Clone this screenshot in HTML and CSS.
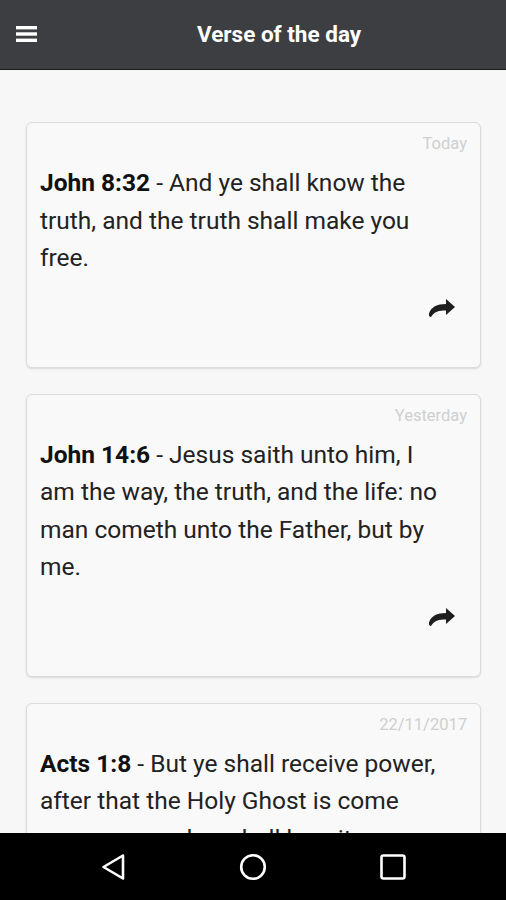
FILE: index.html
```html
<!DOCTYPE html>
<html lang="en">
<head>
    <meta charset="UTF-8">
    <meta name="viewport" content="width=device-width, initial-scale=1.0">
    <title>Verse of the day</title>
    <link rel="stylesheet" href="styles.css">
</head>
<body>
    <header class="app-bar">
        <svg class="menu-icon" width="22" height="18" viewBox="0 0 22 18">
            <rect x="0" y="1" width="21" height="3.4" fill="#fff"/>
            <rect x="0" y="7.3" width="21" height="3.4" fill="#fff"/>
            <rect x="0" y="13.6" width="21" height="3.4" fill="#fff"/>
        </svg>
        <h1 class="app-title">Verse of the day</h1>
    </header>

    <main class="verse-list">
        <div class="card">
            <div class="card-date">Today</div>
            <p class="verse"><b>John 8:32</b> - And ye shall know the truth, and the truth shall make you free.</p>
            <div class="card-actions">
                <svg class="share-icon" width="27" height="18" viewBox="0 0 27 18"><path d="M18 0 L27 8 L18 16 V11.5 C11 11.5 6 12.5 3 18 C1.5 18 0.5 16.5 1 14.5 C3 8 9 5 18 5 Z" fill="#1e1e1e"/></svg>
            </div>
        </div>

        <div class="card">
            <div class="card-date">Yesterday</div>
            <p class="verse"><b>John 14:6</b> - Jesus saith unto him, I am the way, the truth, and the life: no man cometh unto the Father, but by me.</p>
            <div class="card-actions">
                <svg class="share-icon" width="27" height="18" viewBox="0 0 27 18"><path d="M18 0 L27 8 L18 16 V11.5 C11 11.5 6 12.5 3 18 C1.5 18 0.5 16.5 1 14.5 C3 8 9 5 18 5 Z" fill="#1e1e1e"/></svg>
            </div>
        </div>

        <div class="card">
            <div class="card-date">22/11/2017</div>
            <p class="verse"><b>Acts 1:8</b> - But ye shall receive power, after that the Holy Ghost is come upon you: and ye shall be witnesses unto me.</p>
            <div class="card-actions">
                <svg class="share-icon" width="27" height="18" viewBox="0 0 27 18"><path d="M18 0 L27 8 L18 16 V11.5 C11 11.5 6 12.5 3 18 C1.5 18 0.5 16.5 1 14.5 C3 8 9 5 18 5 Z" fill="#1e1e1e"/></svg>
            </div>
        </div>
    </main>

    <nav class="nav-bar">
        <svg width="26" height="28" viewBox="0 0 26 28"><path d="M23 2.5 L3.5 14 L23 25.5 Z" fill="none" stroke="#fff" stroke-width="2.6" stroke-linejoin="round"/></svg>
        <svg width="28" height="28" viewBox="0 0 28 28"><circle cx="14" cy="14" r="11.8" fill="none" stroke="#fff" stroke-width="2.6"/></svg>
        <svg width="26" height="26" viewBox="0 0 26 26"><rect x="1.5" y="1.5" width="23" height="23" rx="2" fill="none" stroke="#fff" stroke-width="2.6"/></svg>
    </nav>
</body>
</html>
```

FILE: styles.css
```css
html, body {
    margin: 0;
    padding: 0;
    height: 100%;
}

body {
    font-family: Roboto, "Liberation Sans", sans-serif;
    background-color: #f7f7f7;
    display: flex;
    flex-direction: column;
    height: 900px;
    overflow: hidden;
}

.app-bar {
    height: 69px;
    flex-shrink: 0;
    background-color: #3d3e42;
    border-bottom: 1px solid #1a1a1a;
    display: flex;
    align-items: center;
    padding-left: 16px;
}

.menu-icon {
    display: block;
    margin-top: -2px;
}

.app-title {
    margin: -2px 0 0 159px;
    color: #fff;
    font-size: 22.5px;
    font-weight: bold;
}

.verse-list {
    flex: 1;
    overflow: hidden;
    padding: 52px 25px 0 26px;
    display: flex;
    flex-direction: column;
    gap: 26px;
}

.card {
    flex-shrink: 0;
    background-color: #f9f9f9;
    border: 1px solid #dcdcdc;
    border-radius: 6px;
    box-shadow: 0 1px 2px rgba(0, 0, 0, 0.12);
    padding: 11px 13px 0 13px;
}

.card-date {
    text-align: right;
    font-size: 16.5px;
    color: #cfcfcf;
    line-height: 20px;
}

.verse {
    margin: 10px 0 0 0;
    font-size: 24.5px;
    line-height: 37.5px;
    color: #222;
    padding-right: 14px;
}

.verse b {
    color: #111;
}

.card-actions {
    display: flex;
    justify-content: flex-end;
    padding: 22px 12px 50px 0;
}

.share-icon {
    display: block;
}

.nav-bar {
    height: 67px;
    flex-shrink: 0;
    background-color: #000;
    display: flex;
    align-items: center;
    justify-content: center;
    gap: 113px;
}
```
